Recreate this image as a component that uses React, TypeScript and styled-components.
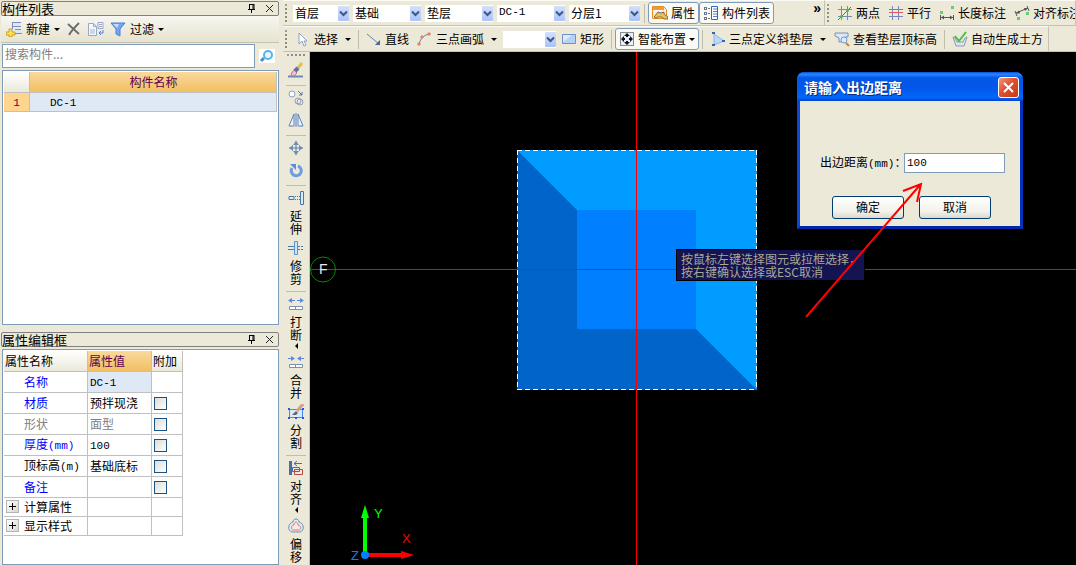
import React from "react";
import styled, { createGlobalStyle, css } from "styled-components";

const face = "#ece9d8";
const frame = "#7f9db9";
const grid = "#c0c0c0";

const GlobalStyle = createGlobalStyle`
  *, *::before, *::after { box-sizing: border-box; }
  html, body { margin: 0; height: 100%; }
  body {
    background: ${face};
    color: #000;
    font: 12px/16px "Noto Sans CJK SC", sans-serif;
    overflow: hidden;
  }
  button, input, select { font: inherit; color: inherit; margin: 0; }
  svg { display: block; flex: none; }
`;

const Window = styled.div`
  display: grid;
  grid-template-columns: 280px minmax(0, 1fr);
  column-gap: 3px;
  height: 100vh;
  overflow: hidden;
`;

const Latin = styled.span`
  font-family: "Liberation Mono", monospace;
  font-size: 11px;
`;

/* ---------- docked panels ---------- */

const Dock = styled.aside`
  display: flex;
  flex-direction: column;
  padding: 1px 1px 0 1px;
  min-height: 0;
`;

const PanelTitle = styled.header`
  display: flex;
  align-items: center;
  height: 15px;
  flex: none;
  border: 1px solid #808080;
  border-radius: 2px;
`;

const PanelName = styled.h2`
  flex: 1;
  margin: 0;
  font-size: 13px;
  line-height: 13px;
  font-weight: 400;
`;

const TitleButton = styled.button`
  display: grid;
  place-items: center;
  width: 18px;
  height: 13px;
  padding: 0;
  border: 0;
  background: none;
`;

const PanelTools = styled.div`
  display: flex;
  align-items: center;
  height: 27px;
  flex: none;
  padding: 0 2px;
  border-bottom: 1px solid #c5c2b2;
  background: linear-gradient(#f7f6f0, #e6e3d0);
`;

const SearchRow = styled.form`
  display: flex;
  height: 24px;
  margin: 1px 0 2px;
  flex: none;
`;

const SearchBox = styled.input`
  flex: 1;
  min-width: 0;
  margin: 0 0 0 1px;
  padding: 0 2px 4px;
  border: 1px solid ${frame};
  background: #fff;
  outline: 0;
  &::placeholder { color: #808080; opacity: 1; }
`;

const SearchButton = styled.button`
  display: grid;
  place-items: center;
  width: 24px;
  padding: 0;
  border: 0;
  background: none;
`;

const PanelBody = styled.div<{ $grow: number }>`
  flex: ${(p) => p.$grow} 1 0;
  min-height: 0;
  margin-left: 1px;
  padding: 1px;
  border: 1px solid ${frame};
  background: #fff;
`;

const Sheet = styled.table<{ $full?: boolean }>`
  table-layout: fixed;
  width: ${(p) => (p.$full ? "100%" : "179px")};
  border-collapse: separate;
  border-spacing: 0;
`;

const cellBase = css`
  padding: 0;
  border-right: 1px solid ${grid};
  border-bottom: 1px solid ${grid};
  font-weight: 400;
  line-height: 16px;
  white-space: nowrap;
  overflow: hidden;
`;

const HeadCell = styled.th<{ $active?: boolean; $center?: boolean }>`
  ${cellBase}
  height: 21px;
  padding-left: 1px;
  text-align: ${(p) => (p.$center ? "center" : "left")};
  color: ${(p) => (p.$active ? "#5b0050" : "#000")};
  background: ${(p) =>
    p.$active ? "linear-gradient(#f9d99b, #f2bf63)" : "linear-gradient(#fff, #ebe9da)"};
`;

const RowNumber = styled.th`
  ${cellBase}
  height: 19px;
  text-align: center;
  color: #5b0050;
  background: #ffd58d;
`;

const Cell = styled.td<{ $selected?: boolean; $indent?: number; $muted?: boolean }>`
  ${cellBase}
  padding-left: ${(p) => p.$indent ?? 2}px;
  color: ${(p) => (p.$muted ? "#808080" : "#000")};
  background: ${(p) => (p.$selected ? "#dfe8f5" : "#fff")};
`;

const PropRow = styled.tr<{ $short?: boolean }>`
  height: ${(p) => (p.$short ? 19 : 21)}px;
`;

const PropName = styled.th<{ $tone: string; $group?: boolean }>`
  ${cellBase}
  padding-left: ${(p) => (p.$group ? 2 : 20)}px;
  text-align: left;
  color: ${(p) => p.$tone};
`;

const GroupLine = styled.span`
  display: flex;
  align-items: center;
  gap: 5px;
`;

const Expander = styled.button`
  display: grid;
  place-items: center;
  width: 13px;
  height: 13px;
  padding: 0;
  border: 1px solid #b4b4b4;
  background: linear-gradient(135deg, #fff, #d8d6cc);
`;

const Tick = styled.input`
  appearance: none;
  display: block;
  width: 13px;
  height: 13px;
  border: 1px solid #1c5180;
  background: linear-gradient(135deg, #dcdcd7, #fff);
`;

const TickCell = styled(Cell)`
  padding-top: 2px;
`;

/* ---------- toolbars ---------- */

const Main = styled.main`
  display: flex;
  flex-direction: column;
  min-width: 0;
  min-height: 0;
`;

const Bars = styled.div`
  display: flex;
  height: 26px;
  flex: none;
  overflow: hidden;
  border-bottom: 1px solid #c5c2b2;
`;

const Bar = styled.div<{ $grow?: boolean; $width?: number }>`
  display: flex;
  align-items: center;
  flex: ${(p) => (p.$width ? `0 0 ${p.$width}px` : p.$grow ? "1 1 auto" : "none")};
  min-width: 0;
  padding: 0 1px 0 2px;
  border-top: 1px solid #fbfaf5;
  border-right: 1px solid #c5c2b2;
  white-space: nowrap;
  overflow: hidden;
`;

const Grip = styled.i<{ $flat?: boolean }>`
  flex: none;
  width: ${(p) => (p.$flat ? 19 : 3)}px;
  height: ${(p) => (p.$flat ? 3 : 19)}px;
  margin: ${(p) => (p.$flat ? "2px 0 2px" : "0 3px 0 0")};
  background:
    linear-gradient(#a09e90, #a09e90) 0 0 / 2px 2px no-repeat,
    radial-gradient(circle at 1px 1px, #8f8d80 1px, transparent 1px) 0 0 / 4px 4px;
`;

const Combos = styled.div`
  display: flex;
  gap: 4px;
  margin: 0 1px 0 2px;
`;

const ComboShell = styled.label<{ $width: number }>`
  display: grid;
  grid-template-columns: minmax(0, 1fr) 11px;
  align-items: center;
  width: ${(p) => p.$width}px;
  height: 17px;
  background: #fff;
`;

const ComboField = styled.select<{ $latin?: boolean }>`
  grid-area: 1 / 1 / 2 / 3;
  appearance: none;
  width: 100%;
  height: 17px;
  padding: 0 2px 2px;
  border: 0;
  background: none;
  line-height: 15px;
  ${(p) => p.$latin && css`font: 11px/15px "Liberation Mono", monospace;`}
`;

const ComboArrow = styled.span`
  grid-area: 1 / 2;
  display: grid;
  place-items: center;
  height: 15px;
  border-radius: 1px;
  background: linear-gradient(#d3e0fd, #a9c2f8);
  pointer-events: none;
`;

const Tool = styled.button<{ $on?: boolean; $tight?: boolean }>`
  display: flex;
  align-items: center;
  gap: ${(p) => (p.$tight ? 4 : 3)}px;
  flex: none;
  height: 22px;
  padding: 0 ${(p) => (p.$tight ? 2 : 3)}px;
  border: 1px solid ${(p) => (p.$on ? frame : "transparent")};
  border-radius: 3px;
  background: ${(p) => (p.$on ? "#faf9f4" : "none")};
  white-space: nowrap;
`;

const Drop = styled.span<{ $near?: boolean }>`
  width: 0;
  margin-left: ${(p) => (p.$near ? 0 : 4)}px;
  border: 3px solid transparent;
  border-top-color: #000;
  border-bottom: 0;
`;

const Divider = styled.i<{ $flat?: boolean }>`
  flex: none;
  width: ${(p) => (p.$flat ? 20 : 1)}px;
  height: ${(p) => (p.$flat ? 1 : 19)}px;
  margin: ${(p) => (p.$flat ? "4px 0 1px" : "0 3px")};
  background: #c0bdae;
`;

const More = styled.button`
  align-self: flex-start;
  margin: 0 2px 0 auto;
  padding: 0;
  border: 0;
  background: none;
  font: 700 14px/14px "Liberation Sans", sans-serif;
`;

const Work = styled.div`
  display: flex;
  flex: 1;
  min-height: 0;
`;

const SideBar = styled.nav`
  display: flex;
  flex-direction: column;
  align-items: center;
  flex: none;
  width: 27px;
  overflow: hidden;
  border-right: 1px solid #c5c2b2;
`;

const SideTool = styled.button<{ $named?: boolean }>`
  display: flex;
  flex-direction: column;
  align-items: center;
  gap: 3px;
  flex: none;
  padding: ${(p) => (p.$named ? "3px 0 2px" : "3px 0")};
  border: 0;
  background: none;
  line-height: 13px;
`;

const SideName = styled.span`
  display: flex;
  flex-direction: column;
  align-items: center;
  width: 12px;
`;

const SideDrop = styled.span`
  margin-top: 2px;
  border: 3px solid transparent;
  border-right-color: #000;
  border-left: 0;
`;

/* ---------- drawing area ---------- */

const Canvas = styled.section`
  position: relative;
  flex: 1;
  min-width: 0;
  background: #000;
  overflow: hidden;
`;

const Drawing = styled.svg`
  position: absolute;
  inset: 0;
  width: 100%;
  height: 100%;
  pointer-events: none;
`;

const Hint = styled.p`
  position: absolute;
  left: 366px;
  top: 197px;
  width: 189px;
  height: 32px;
  margin: 0;
  padding: 2px 4px;
  border: 1px solid #000;
  background: #141452;
  color: #aaa894;
  line-height: 13px;
  white-space: nowrap;
`;

const Dialog = styled.form`
  position: absolute;
  left: 487px;
  top: 20px;
  width: 226px;
  border: 3px solid #0a46dc;
  border-top: 0;
  border-right-color: #0432bd;
  border-bottom-color: #0426a8;
  border-radius: 7px 7px 0 0;
  background: #0a46dc;
`;

const DialogTitle = styled.header`
  display: flex;
  align-items: center;
  justify-content: space-between;
  height: 29px;
  margin: 0 -3px;
  padding: 2px 4px 0 7px;
  border-radius: 7px 7px 0 0;
  background: linear-gradient(#0a50d8, #2a86fb 8%, #0258e8 20%, #0257ea 55%, #0366fb 88%, #0243cf);
  color: #fff;
`;

const DialogName = styled.h1`
  margin: 0;
  padding-bottom: 2px;
  font-size: 14px;
  line-height: 20px;
  font-weight: 700;
  text-shadow: 1px 1px #0a2a80;
`;

const CloseButton = styled.button`
  display: grid;
  place-items: center;
  width: 21px;
  height: 21px;
  padding: 0;
  border: 1px solid #fff;
  border-radius: 3px;
  background: linear-gradient(135deg, #ee9a80, #e0502c 45%, #c8380f);
`;

const DialogBody = styled.div`
  display: flex;
  flex-direction: column;
  gap: 23px;
  padding: 52px 14px 7px 20px;
  background: ${face};
`;

const Field = styled.label`
  display: flex;
  align-items: center;
  height: 20px;
  white-space: nowrap;
`;

const FieldName = styled.span`
  width: 84px;
`;

const FieldInput = styled.input`
  width: 101px;
  height: 20px;
  padding: 0 2px;
  border: 1px solid ${frame};
  background: #fff;
  font: 11px/16px "Liberation Mono", monospace;
  outline: 0;
`;

const Actions = styled.div`
  display: flex;
  gap: 15px;
  padding-left: 12px;
`;

const Action = styled.button`
  width: 72px;
  height: 23px;
  padding: 0 0 2px;
  border: 1px solid #003c74;
  border-radius: 3px;
  background: linear-gradient(#fff, #f2f1ea 70%, #dcd8cc);
`;

/* ---------- icons ---------- */

const Icon = ({ children, w = 16, h = 16 }: { children: React.ReactNode; w?: number; h?: number }) => (
  <svg width={w} height={h} viewBox={`0 0 ${w} ${h}`} fill="none" aria-hidden="true">
    {children}
  </svg>
);

const PinIcon = () => (
  <Icon w={9} h={9}>
    <path d="M2 .5h5M2.500 0v5M6 0v5M7 0v5M1 5.500h7M4.500 5v4" stroke="#000" />
  </Icon>
);
const CrossIcon = () => (
  <Icon w={9} h={9}>
    <path d="M1 1l7 7M8 1l-7 7" stroke="#222" />
  </Icon>
);
const NewIcon = () => (
  <Icon>
    <path d="M8 2h7v3H8zM8 9h7v3H8z" fill="#dfe6f2" />
    <path d="M7 1.500h8M7 5.500h8M9 8.500h6M8 12.500h8M6.500 1v7" stroke="#7b8fb4" />
    <path d="M3 8h3v3h3v3h-3v2h-3v-2h-3v-3h3z" fill="#ffe14a" stroke="#b8902a" strokeWidth=".8" />
  </Icon>
);
const DeleteIcon = () => (
  <Icon>
    <path d="M2 3l11 10M13 2C9 6 5 10 3 14" stroke="#6b6b6b" strokeWidth="1.800" />
  </Icon>
);
const CopyPageIcon = () => (
  <Icon>
    <path d="M.5 2.500h5l3 3v9h-8z" fill="#f5f8fd" stroke="#97a8c8" />
    <path d="M5.500 2.500v3h3" stroke="#97a8c8" />
    <path d="M2 8h5v5H2z" fill="#cbd6e8" />
    <path d="M10 1.500h5v6h-5zM11 3.500h3M11 5.500h3" fill="#f5f8fd" stroke="#97a8c8" />
    <path d="M15 9v3h-4M13 10l-2 2 2 2" stroke="#4a80e0" />
  </Icon>
);
const FunnelIcon = () => (
  <Icon>
    <path d="M1 2h14l-5 6v7l-4-2V8z" fill="#76a6ee" stroke="#4c7fd2" />
    <path d="M3 3h6l-2 4z" fill="#c5dbfb" />
  </Icon>
);
const SearchIcon = () => (
  <Icon>
    <path d="M0 1h16v14H0z" fill="#fff" />
    <path d="M5 10l-3 3" stroke="#3f8fd4" strokeWidth="3" />
    <circle cx="9" cy="7" r="4" fill="#e6f5ff" stroke="#55b4ee" strokeWidth="2" />
  </Icon>
);
const ChevronIcon = () => (
  <Icon w={9} h={7}>
    <path d="M1 1.500l3.500 3.500L8 1.500" stroke="#3d5684" strokeWidth="2" />
  </Icon>
);
const PropsIcon = () => (
  <Icon>
    <path d="M.5 1.500h11l3 3v9H.5z" fill="#ffeed6" stroke="#e58c28" />
    <path d="M1 2h11v3H1z" fill="#f39a32" />
    <path d="M2 12l4-5 3 1 3-1v2l4 3v2h-4l-2-2H6l-2 1z" fill="#e8c260" stroke="#5c5436" strokeWidth=".8" />
    <path d="M3 5.500h7" stroke="#fff" />
  </Icon>
);
const ListIcon = () => (
  <Icon>
    <path d="M1 2h3v3H1zM1 7h3v3H1zM1 12h3v3H1z" fill="#6b778f" />
    <path d="M2 3h1v1H2zM2 8h1v1H2zM2 13h1v1H2z" fill="#fff" />
    <path d="M5 3.500h2M5 8.500h2M5 13.500h2" stroke="#6b778f" />
    <path d="M8.500 1.500h6v13h-6z" fill="#fff" stroke="#2f66c4" />
    <path d="M10 4h4M10 6.500h4M10 9h4M10 11.500h4" stroke="#4a80dc" />
  </Icon>
);
const HashIcon = ({ cross }: { cross?: boolean }) => (
  <Icon>
    <path d="M4.500 1v14M10.500 1v14M1 4.500h14M1 11.500h14" stroke="#7a86bc" />
    {cross ? (
      <>
        <path d="M1 15L14 2" stroke="#a8593a" />
        <circle cx="4.500" cy="11.500" r="1.500" fill="#43c443" />
        <circle cx="10.500" cy="5.500" r="1.500" fill="#43c443" />
      </>
    ) : (
      <path d="M1 4.500h14M1 7.500h14" stroke="#e05a5a" />
    )}
  </Icon>
);
const LengthIcon = () => (
  <Icon>
    <path d="M1 6h3v3H1zM12 1h3v3h-3z" fill="#62cf72" />
    <path d="M1.500 10v5M14.500 10v5M2 12.500h12" stroke="#555" />
    <path d="M2 12.500l3-2v4zM14 12.500l-3-2v4z" fill="#555" />
  </Icon>
);
const AlignDimIcon = () => (
  <Icon>
    <path d="M3 12h3v3H3zM12 7h3v3h-3z" fill="#62cf72" />
    <path d="M1 6l2 5M13 1l2 5M2 8l12-5" stroke="#555" />
    <path d="M2 8.500l3-3 1 3zM14 3l-3 3-1-3z" fill="#555" />
  </Icon>
);
const PointerIcon = () => (
  <Icon>
    <path d="M4 2v11l3-3 2 5 2-1-2-4h3z" fill="#fff" stroke="#8ca0c0" />
  </Icon>
);
const LineIcon = () => (
  <Icon>
    <path d="M1 3l12 10" stroke="#5f83b4" />
    <path d="M14 9v5H9z" fill="#44699d" />
  </Icon>
);
const ArcIcon = () => (
  <Icon>
    <path d="M2 14C3 8 6 4 13 3" stroke="#5b82b8" />
    <path d="M1 12h2v2H1zM4 5h2v2H4zM11 2h2v2h-2z" fill="#fbd0bc" stroke="#e06e50" />
  </Icon>
);
const RectIcon = () => (
  <Icon>
    <path d="M1.500 3.500h13v9h-13z" fill="#b9d0f6" stroke="#6c90cc" />
    <path d="M2 4h9L2 11z" fill="#dfeafd" />
  </Icon>
);
const SmartIcon = () => (
  <Icon>
    <path d="M1.500 1.500h13v13h-13z" fill="#e6f0fc" stroke="#222" strokeDasharray="1 1" />
    <path d="M8 3v3M8 10v3M3 8h3M10 8h3" stroke="#111" strokeWidth="2" />
    <path d="M5 5l3-3 3 3zM5 11l3 3 3-3zM5 5L2 8l3 3zM11 5l3 3-3 3z" fill="#111" />
  </Icon>
);
const SlopeIcon = () => (
  <Icon>
    <path d="M4 3v11l10-4z" fill="#b9d8fa" stroke="#8ab4ea" />
    <path d="M2 1h3v2H2zM2 13h3v2H2zM12 9h3v2h-3z" fill="#3a62b0" />
  </Icon>
);
const ViewTopIcon = () => (
  <Icon>
    <path d="M1 2h13v4h-3v5H5V7L1 5z" fill="#dde6f8" stroke="#7d8fb8" />
    <circle cx="10" cy="9" r="3" fill="#d7edff" stroke="#6f9fce" />
    <path d="M12 12l3 3" stroke="#c9823c" strokeWidth="2" />
  </Icon>
);
const SoilIcon = () => (
  <Icon>
    <path d="M1 6l3 9h8l3-9-2 1-2 4H5L3 7z" fill="#dfe5ee" stroke="#8c99ae" />
    <path d="M3 5l4 5 7-9" stroke="#45c04a" strokeWidth="2" />
  </Icon>
);
const BrushIcon = () => (
  <Icon>
    <path d="M0 14.500h15" stroke="#6f89b4" strokeWidth="2" />
    <path d="M14 1L9 7" stroke="#e6bd52" strokeWidth="3" />
    <path d="M10 6L7 9" stroke="#5675b5" strokeWidth="4" />
    <path d="M6 8l3 3-3 3H4l-1-2z" fill="#f1c2d2" stroke="#b8718e" />
  </Icon>
);
const DuplicateIcon = () => (
  <Icon>
    <circle cx="4" cy="4" r="3" fill="#fafcff" stroke="#8ea0c0" />
    <circle cx="10" cy="11" r="3" stroke="#8ea0c0" />
    <circle cx="12" cy="12" r="3" stroke="#8ea0c0" />
    <path d="M10 1l4 4M14 2v3h-3" stroke="#4a78bc" />
  </Icon>
);
const MirrorIcon = () => (
  <Icon>
    <path d="M6 2v12H1zM10 2v12h5z" fill="#eef4ff" stroke="#5a82bc" />
    <path d="M8 1v14" stroke="#5a82bc" />
  </Icon>
);
const MoveIcon = () => (
  <Icon>
    <path d="M8 1v14M1 8h14" stroke="#5b7ea8" />
    <path d="M5 5l3-4 3 4zM5 11l3 4 3-4zM5 5L1 8l4 3zM11 5l4 3-4 3z" fill="#6f90b8" />
    <path d="M5 5h2v2H5zM9 5h2v2H9zM5 9h2v2H5zM9 9h2v2H9z" fill={face} />
  </Icon>
);
const RotateIcon = () => (
  <Icon>
    <path d="M4 6a5 5 0 1 0 6-2" stroke="#6c9be8" strokeWidth="3" />
    <path d="M2 2h6v6z" fill="#5b8be0" />
  </Icon>
);
const ExtendIcon = () => (
  <Icon>
    <path d="M1 6.500h5v3H1zM12.500 1.500h3v13h-3z" fill="#dfeaf8" stroke="#4678ac" />
    <path d="M7 6.500h5M7 9.500h5" stroke="#4678ac" strokeDasharray="1 1" />
  </Icon>
);
const TrimIcon = () => (
  <Icon>
    <path d="M0 6.500h6M0 9.500h6" stroke="#4678ac" />
    <path d="M10 6.500h6M10 9.500h6" stroke="#4678ac" strokeDasharray="2 1" />
    <path d="M6.500 1.500h3v13h-3z" fill="#cfe1f7" stroke="#5b90cf" />
  </Icon>
);
const BreakIcon = ({ join }: { join?: boolean }) => (
  <Icon>
    <path d={join ? "M0 4.500h5M11 4.500h5" : "M2 4.500h5M9 4.500h5"} stroke="#5d8be0" />
    <path
      d={join ? "M3 2l4 2.500L3 7zM13 2L9 4.500 13 7z" : "M4 2L0 4.500 4 7zM12 2l4 2.500L12 7z"}
      fill="#5d8be0"
    />
    <path d="M1.500 10.500h13v3h-13zM7.500 10v4" fill="#fff" stroke="#7890b8" />
  </Icon>
);
const SplitIcon = () => (
  <Icon>
    <path d="M1.500 5.500h13v8h-13z" fill="#d9e9ff" stroke="#3f8cf0" />
    <path d="M0 4h2v2H0zM14 4h2v2h-2zM0 13h2v2H0zM14 13h2v2h-2zM7 13h2v2H7z" fill="#2c4ff0" />
    <path d="M15 0L9 7" stroke="#d0a08a" strokeWidth="3" />
    <path d="M4 11l4-4 2 2-2 2z" fill="#666" />
  </Icon>
);
const AlignIcon = () => (
  <Icon>
    <path d="M2.500 1v14" stroke="#4c6f94" strokeWidth="3" />
    <path d="M6 3.500h8M9 1L6 3.500 9 6" stroke="#4468d8" />
    <path d="M6.500 9.500h8v5h-8z" stroke="#b84848" />
    <path d="M4.500 7.500h7v4h-7z" stroke="#3f68d8" />
  </Icon>
);
const OffsetIcon = () => (
  <Icon>
    <path d="M5 4c0-4 6-4 6 0 5 1 6 9 1 10H4C-1 13 0 5 5 4z" fill="#dfeaf5" stroke="#6d93b8" />
    <path d="M6 7c0-4 4-4 4 0 4 1 3 5 1 5H5C3 12 3 7 6 7z" fill="#f7e8e6" stroke="#dc7a72" />
  </Icon>
);

/* ---------- composed parts ---------- */

const Combo = ({ value, width, label, latin }: { value: string; width: number; label: string; latin?: boolean }) => (
  <ComboShell $width={width}>
    <ComboField aria-label={label} $latin={latin} defaultValue={value}>
      <option value={value}>{value}</option>
    </ComboField>
    <ComboArrow>
      <ChevronIcon />
    </ComboArrow>
  </ComboShell>
);

const SideItem = ({ icon, name, drop }: { icon: React.ReactNode; name: string; drop?: boolean }) => (
  <SideTool type="button" $named>
    {icon}
    <SideName>
      {name.split("").map((c) => (
        <span key={c}>{c}</span>
      ))}
      {drop && <SideDrop />}
    </SideName>
  </SideTool>
);

const PanelHeader = ({ name }: { name: string }) => (
  <PanelTitle>
    <PanelName>{name}</PanelName>
    <TitleButton type="button" aria-label="固定">
      <PinIcon />
    </TitleButton>
    <TitleButton type="button" aria-label="关闭">
      <CrossIcon />
    </TitleButton>
  </PanelTitle>
);

const Gap = styled.div`
  height: 7px;
  flex: none;
`;

const TitleGap = styled.div`
  height: 2px;
  flex: none;
`;

type Property = { name: string; unit?: string; tone: string; value: React.ReactNode; muted?: boolean; tick?: boolean; selected?: boolean };

const properties: Property[] = [
  { name: "名称", tone: "#0000ff", value: <Latin>DC-1</Latin>, selected: true },
  { name: "材质", tone: "#0000ff", value: "预拌现浇", tick: true },
  { name: "形状", tone: "#808080", value: "面型", muted: true, tick: true },
  { name: "厚度", unit: "(mm)", tone: "#0000ff", value: <Latin>100</Latin>, tick: true },
  { name: "顶标高", unit: "(m)", tone: "#000", value: "基础底标", tick: true },
  { name: "备注", tone: "#0000ff", value: "", tick: true },
];

export default function App() {
  return (
    <Window>
      <GlobalStyle />
      <Dock>
        <PanelHeader name="构件列表" />
        <PanelTools>
          <Tool type="button" $tight>
            <NewIcon />
            新建
            <Drop $near />
          </Tool>
          <Tool type="button" $tight aria-label="删除">
            <DeleteIcon />
          </Tool>
          <Tool type="button" $tight aria-label="复制">
            <CopyPageIcon />
          </Tool>
          <Tool type="button" $tight>
            <FunnelIcon />
            过滤
            <Drop $near />
          </Tool>
        </PanelTools>
        <SearchRow>
          <SearchBox type="search" aria-label="搜索构件" placeholder="搜索构件..." />
          <SearchButton type="button" aria-label="搜索">
            <SearchIcon />
          </SearchButton>
        </SearchRow>
        <PanelBody $grow={256}>
          <Sheet $full>
            <colgroup>
              <col width="26" />
              <col />
            </colgroup>
            <thead>
              <tr>
                <HeadCell />
                <HeadCell $active $center>
                  构件名称
                </HeadCell>
              </tr>
            </thead>
            <tbody>
              <tr>
                <RowNumber scope="row">
                  <Latin>1</Latin>
                </RowNumber>
                <Cell $selected $indent={20}>
                  <Latin>DC-1</Latin>
                </Cell>
              </tr>
            </tbody>
          </Sheet>
        </PanelBody>
        <Gap />
        <PanelHeader name="属性编辑框" />
        <TitleGap />
        <PanelBody $grow={217}>
          <Sheet>
            <colgroup>
              <col width="84" />
              <col width="64" />
              <col width="31" />
            </colgroup>
            <thead>
              <tr>
                <HeadCell>属性名称</HeadCell>
                <HeadCell $active>属性值</HeadCell>
                <HeadCell>附加</HeadCell>
              </tr>
            </thead>
            <tbody>
              {properties.map((p) => (
                <PropRow key={p.name}>
                  <PropName scope="row" $tone={p.tone}>
                    {p.name}
                    {p.unit && <Latin>{p.unit}</Latin>}
                  </PropName>
                  <Cell $selected={p.selected} $muted={p.muted}>
                    {p.value}
                  </Cell>
                  <TickCell>{p.tick && <Tick type="checkbox" aria-label={`${p.name} 附加`} />}</TickCell>
                </PropRow>
              ))}
              {["计算属性", "显示样式"].map((g) => (
                <PropRow key={g} $short>
                  <PropName scope="row" $tone="#000" $group>
                    <GroupLine>
                      <Expander type="button" aria-label={`展开 ${g}`}>
                        <Icon w={7} h={7}>
                          <path d="M0 3.500h7M3.500 0v7" stroke="#000" />
                        </Icon>
                      </Expander>
                      {g}
                    </GroupLine>
                  </PropName>
                  <Cell />
                  <Cell />
                </PropRow>
              ))}
            </tbody>
          </Sheet>
        </PanelBody>
      </Dock>

      <Main>
        <Bars>
          <Bar $grow>
            <Grip />
            <Combos>
              <Combo label="楼层" value="首层" width={56} />
              <Combo label="类别" value="基础" width={68} />
              <Combo label="类型" value="垫层" width={68} />
              <Combo label="构件" value="DC-1" width={68} latin />
              <Combo label="分层" value="分层1" width={71} />
            </Combos>
            <Divider />
            <Tool type="button" $on>
              <PropsIcon />
              属性
            </Tool>
            <Tool type="button" $on>
              <ListIcon />
              构件列表
            </Tool>
            <More type="button" aria-label="更多">
              »
            </More>
          </Bar>
          <Bar $width={251}>
            <Grip />
            <Tool type="button">
              <HashIcon cross />
              两点
            </Tool>
            <Tool type="button">
              <HashIcon />
              平行
            </Tool>
            <Tool type="button">
              <LengthIcon />
              长度标注
            </Tool>
            <Tool type="button">
              <AlignDimIcon />
              对齐标注
            </Tool>
          </Bar>
        </Bars>
        <Bars>
          <Bar>
            <Grip />
            <Tool type="button">
              <PointerIcon />
              选择
              <Drop />
            </Tool>
            <Divider />
            <Tool type="button">
              <LineIcon />
              直线
            </Tool>
            <Tool type="button">
              <ArcIcon />
              三点画弧
              <Drop />
            </Tool>
            <Combos>
              <Combo label="半径" value="" width={53} />
            </Combos>
            <Tool type="button">
              <RectIcon />
              矩形
            </Tool>
            <Divider />
            <Tool type="button" $on>
              <SmartIcon />
              智能布置
              <Drop $near />
            </Tool>
            <Divider />
            <Tool type="button">
              <SlopeIcon />
              三点定义斜垫层
              <Drop />
            </Tool>
            <Tool type="button">
              <ViewTopIcon />
              查看垫层顶标高
            </Tool>
            <Divider />
            <Tool type="button">
              <SoilIcon />
              自动生成土方
            </Tool>
          </Bar>
        </Bars>

        <Work>
          <SideBar>
            <Grip $flat />
            <SideTool type="button" aria-label="删除">
              <BrushIcon />
            </SideTool>
            <Divider $flat />
            <SideTool type="button" aria-label="复制">
              <DuplicateIcon />
            </SideTool>
            <SideTool type="button" aria-label="镜像">
              <MirrorIcon />
            </SideTool>
            <Divider $flat />
            <SideTool type="button" aria-label="移动">
              <MoveIcon />
            </SideTool>
            <SideTool type="button" aria-label="旋转">
              <RotateIcon />
            </SideTool>
            <Divider $flat />
            <SideItem icon={<ExtendIcon />} name="延伸" />
            <SideItem icon={<TrimIcon />} name="修剪" />
            <Divider $flat />
            <SideItem icon={<BreakIcon />} name="打断" drop />
            <SideItem icon={<BreakIcon join />} name="合并" />
            <SideItem icon={<SplitIcon />} name="分割" />
            <Divider $flat />
            <SideItem icon={<AlignIcon />} name="对齐" drop />
            <SideItem icon={<OffsetIcon />} name="偏移" />
          </SideBar>

          <Canvas>
            <Drawing fontFamily="Liberation Sans, sans-serif">
              <rect x="207" y="98" width="240" height="240" fill="#009cff" />
              <path d="M207 98l60 60v119h119l61 61H207z" fill="#0064c8" />
              <rect x="267" y="158" width="119" height="119" fill="#0080ff" />
              <path
                d="M207 98.500h240M207 337.500h240M207.500 98v240M446.500 98v240"
                stroke="#fff"
                strokeDasharray="5 3"
              />
              <path d="M326.500 0v2000M0 217.500h4000" stroke="#f00" />
              <circle cx="13" cy="217.500" r="12.500" fill="none" stroke="#008a00" />
              <text x="9" y="222" fontSize="14" fill="#e8e8e8">
                F
              </text>
              <path d="M55 503v-40" stroke="#0f0" strokeWidth="4" />
              <path d="M51 466l4-13 4 13z" fill="#0f0" />
              <path d="M55 503h40" stroke="#f00" strokeWidth="4" />
              <path d="M91 499l13 4-13 4z" fill="#f00" />
              <circle cx="55" cy="503" r="4" fill="#0080ff" />
              <text x="64" y="466" fontSize="13" fill="#0f0">
                Y
              </text>
              <text x="92" y="491" fontSize="13" fill="#f00">
                X
              </text>
              <text x="41" y="508" fontSize="13" fill="#0080ff">
                Z
              </text>
            </Drawing>
            <Hint>
              按鼠标左键选择图元或拉框选择，
              <br />
              按右键确认选择或ESC取消
            </Hint>
            <Dialog>
              <DialogTitle>
                <DialogName>请输入出边距离</DialogName>
                <CloseButton type="button" aria-label="关闭">
                  <Icon w={13} h={13}>
                    <path d="M2 2l9 9M11 2l-9 9" stroke="#fff" strokeWidth="2" />
                  </Icon>
                </CloseButton>
              </DialogTitle>
              <DialogBody>
                <Field>
                  <FieldName>
                    出边距离<Latin>(mm)</Latin>：
                  </FieldName>
                  <FieldInput type="text" defaultValue="100" />
                </Field>
                <Actions>
                  <Action type="button">确定</Action>
                  <Action type="button">取消</Action>
                </Actions>
              </DialogBody>
            </Dialog>
            <Drawing>
              <path d="M496 265L610 133M593 139l18-7-4 18" fill="none" stroke="#f00" strokeWidth="2" />
            </Drawing>
          </Canvas>
        </Work>
      </Main>
    </Window>
  );
}
